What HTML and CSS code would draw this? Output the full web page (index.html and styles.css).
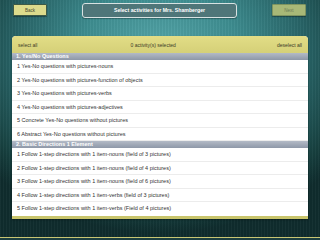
FILE: index.html
```html
<!DOCTYPE html>
<html lang="en">

<head>
    <meta charset="UTF-8">
    <meta name="viewport" content="width=device-width, initial-scale=1.0">
    <title>Select activities</title>
    <link rel="stylesheet" href="styles.css">
</head>

<body>
    <div class="screen">
        <div class="topbar">
            <button class="nav-button back">Back</button>
            <div class="title">Select activities for Mrs. Shamberger</div>
            <button class="nav-button next">Next</button>
        </div>

        <div class="panel">
            <div class="panel-header">
                <span class="select-all">select all</span>
                <span class="count">0 activity(s) selected</span>
                <span class="deselect-all">deselect all</span>
            </div>

            <div class="section">1. Yes/No Questions</div>
            <div class="row">1 Yes-No questions with pictures-nouns</div>
            <div class="row">2 Yes-No questions with pictures-function of objects</div>
            <div class="row">3 Yes-No questions with pictures-verbs</div>
            <div class="row">4 Yes-No questions with pictures-adjectives</div>
            <div class="row">5 Concrete Yes-No questions without pictures</div>
            <div class="row">6 Abstract Yes-No questions without pictures</div>

            <div class="section">2. Basic Directions 1 Element</div>
            <div class="row">1 Follow 1-step directions with 1 item-nouns (field of 3 pictures)</div>
            <div class="row">2 Follow 1-step directions with 1 item-nouns (field of 4 pictures)</div>
            <div class="row">3 Follow 1-step directions with 1 item-nouns (field of 6 pictures)</div>
            <div class="row">4 Follow 1-step directions with 1 item-verbs (field of 3 pictures)</div>
            <div class="row last">5 Follow 1-step directions with 1 item-verbs (Field of 4 pictures)</div>
        </div>

        <div class="footer"></div>
    </div>
</body>

</html>
```

FILE: styles.css
```css
* {
    box-sizing: border-box;
}

body {
    margin: 0;
    font-family: "Liberation Sans", Arial, sans-serif;
    background-color: #1d4a4c;
}

.screen {
    width: 320px;
    height: 240px;
    display: flex;
    flex-direction: column;
    overflow: hidden;
    background:
        repeating-linear-gradient(90deg, rgba(255, 255, 255, 0.03) 0 1px, rgba(0, 0, 0, 0.03) 1px 3px),
        radial-gradient(ellipse 70% 75% at 50% 22%, #55a7aa 0%, #3e8d90 35%, #286467 65%, #17403f 88%, #0f2c2d 100%);
}

.topbar {
    height: 19px;
    display: flex;
    justify-content: space-between;
    align-items: center;
    padding: 0 14px 0 13px;
}

.nav-button {
    width: 34px;
    height: 12px;
    margin-top: 1px;
    padding: 0;
    font: 4.5px "Liberation Sans", Arial, sans-serif;
    border: 1px solid #3d5a46;
    border-radius: 1px;
    box-shadow: 0 1px 1px rgba(0, 0, 0, 0.35);
}

.back {
    background: #dcdb8c;
    color: #4a4a30;
}

.next {
    background: #a8b877;
    color: #6a7a56;
    border-color: #7e9460;
}

.title {
    width: 155px;
    height: 15px;
    line-height: 13px;
    margin-top: 1px;
    text-align: center;
    color: #fff;
    font-weight: bold;
    font-size: 5.2px;
    background: #4f7679;
    border: 1px solid #d8e2e2;
    border-radius: 3px;
    box-shadow: 0 1px 1px rgba(0, 0, 0, 0.3);
}

.panel {
    margin: 17px 12px 0 12px;
    background: #fff;
    border-radius: 4px 4px 0 0;
    border-bottom: 3px solid #c9c56c;
    overflow: hidden;
    box-shadow: 0 1px 2px rgba(0, 0, 0, 0.35);
}

.panel-header {
    height: 17px;
    display: flex;
    justify-content: space-between;
    align-items: center;
    padding: 1px 6px 0 6px;
    font-size: 5px;
    color: #3a3a28;
    background: linear-gradient(#e2dd86, #d5d078);
}

.count {
    margin-left: -8px;
}

.section {
    height: 7px;
    line-height: 7px;
    padding-left: 4px;
    font-size: 5.5px;
    font-weight: bold;
    color: #fff;
    background: linear-gradient(#b3bac6, #8e98a8);
}

.row {
    height: 13.5px;
    line-height: 13px;
    padding-left: 5px;
    font-size: 5.5px;
    color: #333;
    border-bottom: 1px solid #ececec;
    white-space: nowrap;
}

.row.last {
    border-bottom: none;
}

.footer {
    margin-top: auto;
    height: 3px;
    border-top: 1.5px solid #c8c673;
    background: #1c3f41;
}
```
